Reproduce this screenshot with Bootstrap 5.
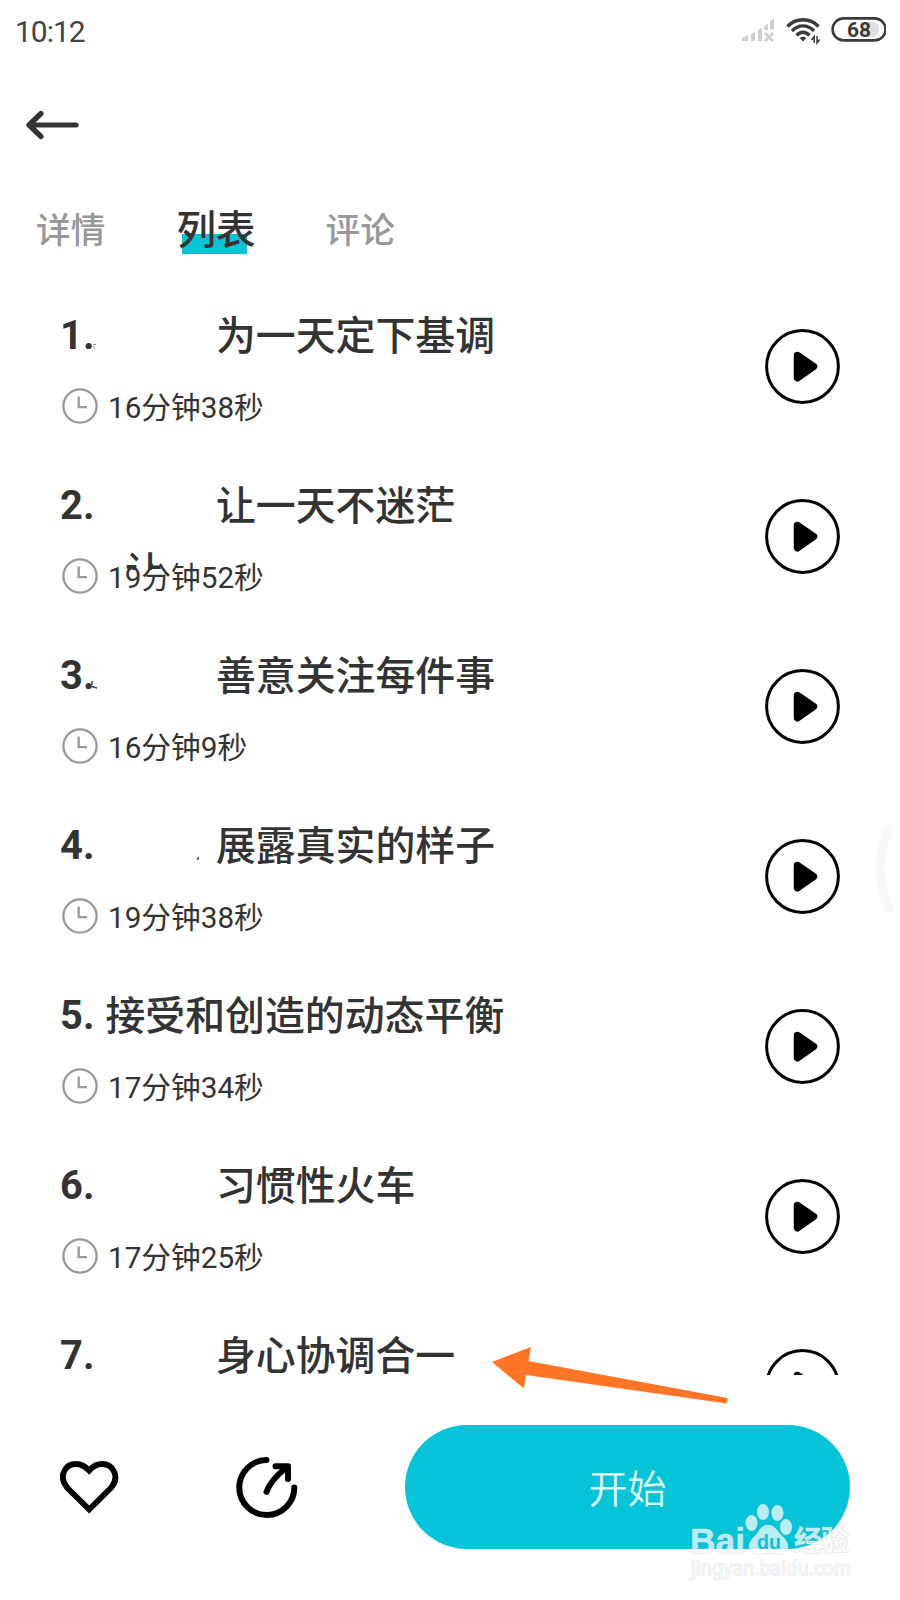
<!DOCTYPE html>
<html lang="zh-CN">
<head>
<meta charset="utf-8">
<meta name="viewport" content="width=device-width, initial-scale=1">
<title>列表</title>
<link rel="stylesheet" href="https://cdn.jsdelivr.net/npm/bootstrap@5.3.0/dist/css/bootstrap.min.css">
<style>
body{background:#fefefe;color:#333;font-family:Roboto,"Noto Sans CJK SC",sans-serif}
svg{display:block;flex:none}
.screen{width:900px;height:1600px;overflow:hidden}
.status{height:60px;padding:0 14px 0 15px}
.clock-text{font-size:30px;line-height:36px;letter-spacing:-1px;color:#444;padding-top:4px}
.topbar{height:130px;padding:46px 0 0 26px}
.tabs{height:120px;padding:16px 0 0 36px;line-height:50px;font-size:34.7px;color:#999;font-weight:500}
.tab-on{font-size:39.6px;color:#333;margin:0 70px 0 71px}
.tab-on::before{content:"";position:absolute;left:5.5px;top:28px;width:65.5px;height:20px;background:#0cc2d4}
.tracks{height:1065px;overflow:hidden;padding:0 60px}
.track{height:170px}
.name{font-size:39.9px;line-height:50px;font-weight:500;white-space:pre;padding-top:1px}
.name b{font-weight:700}
.name span{position:relative;top:1px;left:1px}
.gap-name{margin-left:110.5px}
.dur{margin:27px 0 0 2px;height:36px;font-size:29.7px;line-height:36px;gap:10px}
.dur span{padding-top:2px}
.play{margin:18.8px 0 0}
.ghost{left:65px;top:68px;height:22px;font-size:40px;line-height:50px;font-weight:500;overflow:hidden}
.speck{left:0;top:0;pointer-events:none}
.actions{padding:50px 50px 0 60px}
.share{margin-left:8px}
.start{width:445px;height:124px;background:#06c3d7;color:#dcfcfb;font-size:39px;font-weight:350;padding:13px 0 6px}
.start:hover{background:#06c3d7;color:#dcfcfb}
.over{left:0;top:0;pointer-events:none}
</style>
</head>
<body>
<svg width="0" height="0" class="position-absolute">
<symbol id="clk" viewBox="0 0 36 36"><circle cx="18" cy="18" r="16.600" fill="none" stroke="#999" stroke-width="2.300"/><path d="M16.700 8.500V19.200H25" fill="none" stroke="#999" stroke-width="2.300"/></symbol>
<symbol id="ply" viewBox="0 0 75 75"><circle cx="37.500" cy="37.500" r="35.900" fill="none" stroke="#000" stroke-width="3"/><path d="M32.500 26.500 48.500 37.500 32.500 48.800Z" fill="#000" stroke="#000" stroke-width="7.500" stroke-linejoin="round"/></symbol>
</svg>
<main class="screen position-relative">
  <header class="status d-flex justify-content-between align-items-center">
    <span class="clock-text">10:12</span>
    <svg width="160" height="30" viewBox="726 15 160 30">
      <g fill="#cfcfcf"><path d="M742 41v-3l6-3v6zM751 34l4-2v9h-4zM758 30l4-2v13h-4zM764 26l4-2v6h-4zM770 20.500l4-2v11h-4z"/><path d="M765 33l8 8m0-8-8 8" stroke="#cfcfcf" stroke-width="2.500"/></g>
      <g fill="none" stroke="#3b3b3b" stroke-width="3.300"><path d="M787.500 26.500C796 17.500 810 17.500 818.500 26.500M792 31C798.500 24.300 807.500 24.300 814 31M796.500 35.300C800.500 31.200 805.500 31.200 809.500 35.300"/></g>
      <path d="M803 41.500l-3.300-3.400q3.300-2.600 6.600 0z" fill="#3b3b3b"/>
      <path d="M814.200 43v-6.500l-2.600 3.500M817 36v7l2.600-3.500" fill="none" stroke="#3b3b3b" stroke-width="1.500"/>
      <path d="M864 22h9a7.700 7.700 0 0 1 0 15h-9z" fill="#e0e0e0"/>
      <rect x="832.600" y="18.400" width="53" height="22" rx="11" fill="none" stroke="#3b3b3b" stroke-width="2.600"/>
      <text x="859" y="37" text-anchor="middle" font-family="Roboto" font-size="21" font-weight="700" fill="#3b3b3b">68</text>
    </svg>
  </header>
  <div class="topbar">
    <svg width="54" height="38" viewBox="26 106 54 38"><path d="M76 125H29M41 113.500 29 125 41 136.500" fill="none" stroke="#333" stroke-width="5.200" stroke-linecap="round" stroke-linejoin="round"/></svg>
  </div>
  <nav class="tabs d-flex">
    <span>详情</span><span class="tab-on position-relative"><span class="position-relative">列表</span></span><span>评论</span>
  </nav>
  <section class="tracks">
    <article class="track d-flex justify-content-between position-relative"><div><div class="name"><b>1. </b><span class="gap-name">为一天定下基调</span></div><div class="dur d-flex"><svg width="36" height="36"><use href="#clk"/></svg><span>16分钟38秒</span></div></div><svg class="play" width="75" height="75"><use href="#ply"/></svg>
      <svg class="speck position-absolute" width="60" height="50"><path d="M33 34.500h3M33 36l2 3" stroke="#999" stroke-width="1"/></svg></article>
    <article class="track d-flex justify-content-between position-relative"><div><div class="name"><b>2. </b><span class="gap-name">让一天不迷茫</span></div><div class="dur d-flex"><svg width="36" height="36"><use href="#clk"/></svg><span>19分钟52秒</span></div></div><svg class="play" width="75" height="75"><use href="#ply"/></svg>
      <span class="ghost position-absolute">让</span></article>
    <article class="track d-flex justify-content-between position-relative"><div><div class="name"><b>3. </b><span class="gap-name">善意关注每件事</span></div><div class="dur d-flex"><svg width="36" height="36"><use href="#clk"/></svg><span>16分钟9秒</span></div></div><svg class="play" width="75" height="75"><use href="#ply"/></svg>
      <svg class="speck position-absolute" width="60" height="50"><path d="M32 31v4M32 36.500l5 1.500" stroke="#444" stroke-width="1.500"/></svg></article>
    <article class="track d-flex justify-content-between position-relative"><div><div class="name"><b>4. </b><span class="gap-name">展露真实的样子</span></div><div class="dur d-flex"><svg width="36" height="36"><use href="#clk"/></svg><span>19分钟38秒</span></div></div><svg class="play" width="75" height="75"><use href="#ply"/></svg>
      <svg class="speck position-absolute" width="150" height="50"><path d="M136 39.500l3-3v3z" fill="#333"/></svg></article>
    <article class="track d-flex justify-content-between"><div><div class="name"><b>5. </b><span>接受和创造的动态平衡</span></div><div class="dur d-flex"><svg width="36" height="36"><use href="#clk"/></svg><span>17分钟34秒</span></div></div><svg class="play" width="75" height="75"><use href="#ply"/></svg></article>
    <article class="track d-flex justify-content-between"><div><div class="name"><b>6. </b><span class="gap-name">习惯性火车</span></div><div class="dur d-flex"><svg width="36" height="36"><use href="#clk"/></svg><span>17分钟25秒</span></div></div><svg class="play" width="75" height="75"><use href="#ply"/></svg></article>
    <article class="track d-flex justify-content-between"><div><div class="name"><b>7. </b><span class="gap-name">身心协调合一</span></div></div><svg class="play" width="75" height="75"><use href="#ply"/></svg></article>
  </section>
  <footer class="actions d-flex justify-content-between align-items-center">
    <svg width="60" height="64" viewBox="60 1455 60 64"><path d="M89.200 1509.500 67 1487.500C58 1476.500 65 1464 76 1464Q83 1464 89.200 1470.500Q95 1464 102 1464C113.500 1464 120 1477 111.300 1487.500Z" fill="none" stroke="#000" stroke-width="5.800"/></svg>
    <svg class="share" width="64" height="64" viewBox="235 1455 64 64"><path d="M266.500 1460A27.500 27.500 0 1 0 294.300 1487.500M266.500 1492Q270.500 1480 286 1468M275.500 1466.300H288V1479" fill="none" stroke="#000" stroke-width="6" stroke-linecap="round" stroke-linejoin="round"/></svg>
    <button class="start btn rounded-pill border-0" type="button">开始</button>
  </footer>
  <svg class="over position-absolute" width="900" height="1600" viewBox="0 0 900 1600">
    <path d="M889 829Q871 869 889 909" fill="none" stroke="#f8f8f8" stroke-width="9" stroke-linecap="round"/>
    <path d="M492 1362 531 1347 528.500 1361 727.500 1398 727 1403.500 526 1375 524 1388.500Z" fill="#ff7526"/>
    <g fill="#fff" fill-opacity=".72" stroke="#bfc9ca" stroke-opacity=".55" stroke-width="1" paint-order="stroke">
      <text x="690" y="1553" font-family="Liberation Sans" font-size="35" font-weight="700" textLength="55" lengthAdjust="spacingAndGlyphs">Bai</text>
      <ellipse cx="751.500" cy="1523" rx="5.800" ry="7.800"/><ellipse cx="763" cy="1512" rx="5.800" ry="7.800"/><ellipse cx="777.500" cy="1513" rx="5.800" ry="7.800"/><ellipse cx="786" cy="1527" rx="5.800" ry="7.800"/>
      <path d="M768 1525C776 1525 777 1532 783 1537C791 1544 789 1554 779 1554Q768 1552 758 1554C748 1554 746 1544 754 1537C760 1532 760 1525 768 1525Z"/>
      <text x="794" y="1551" font-family="Noto Sans CJK SC" font-size="28" font-weight="700" textLength="55">经验</text>
      <text x="691" y="1575" font-family="Noto Sans" font-size="20" textLength="160" lengthAdjust="spacingAndGlyphs">jingyan.baidu.com</text>
    </g>
    <text x="757" y="1549" font-family="Liberation Sans" font-size="20" font-weight="700" fill="#12bfd2" textLength="24" lengthAdjust="spacingAndGlyphs">du</text>
  </svg>
</main>
<script src="https://cdn.jsdelivr.net/npm/bootstrap@5.3.0/dist/js/bootstrap.bundle.min.js"></script>
</body>
</html>
